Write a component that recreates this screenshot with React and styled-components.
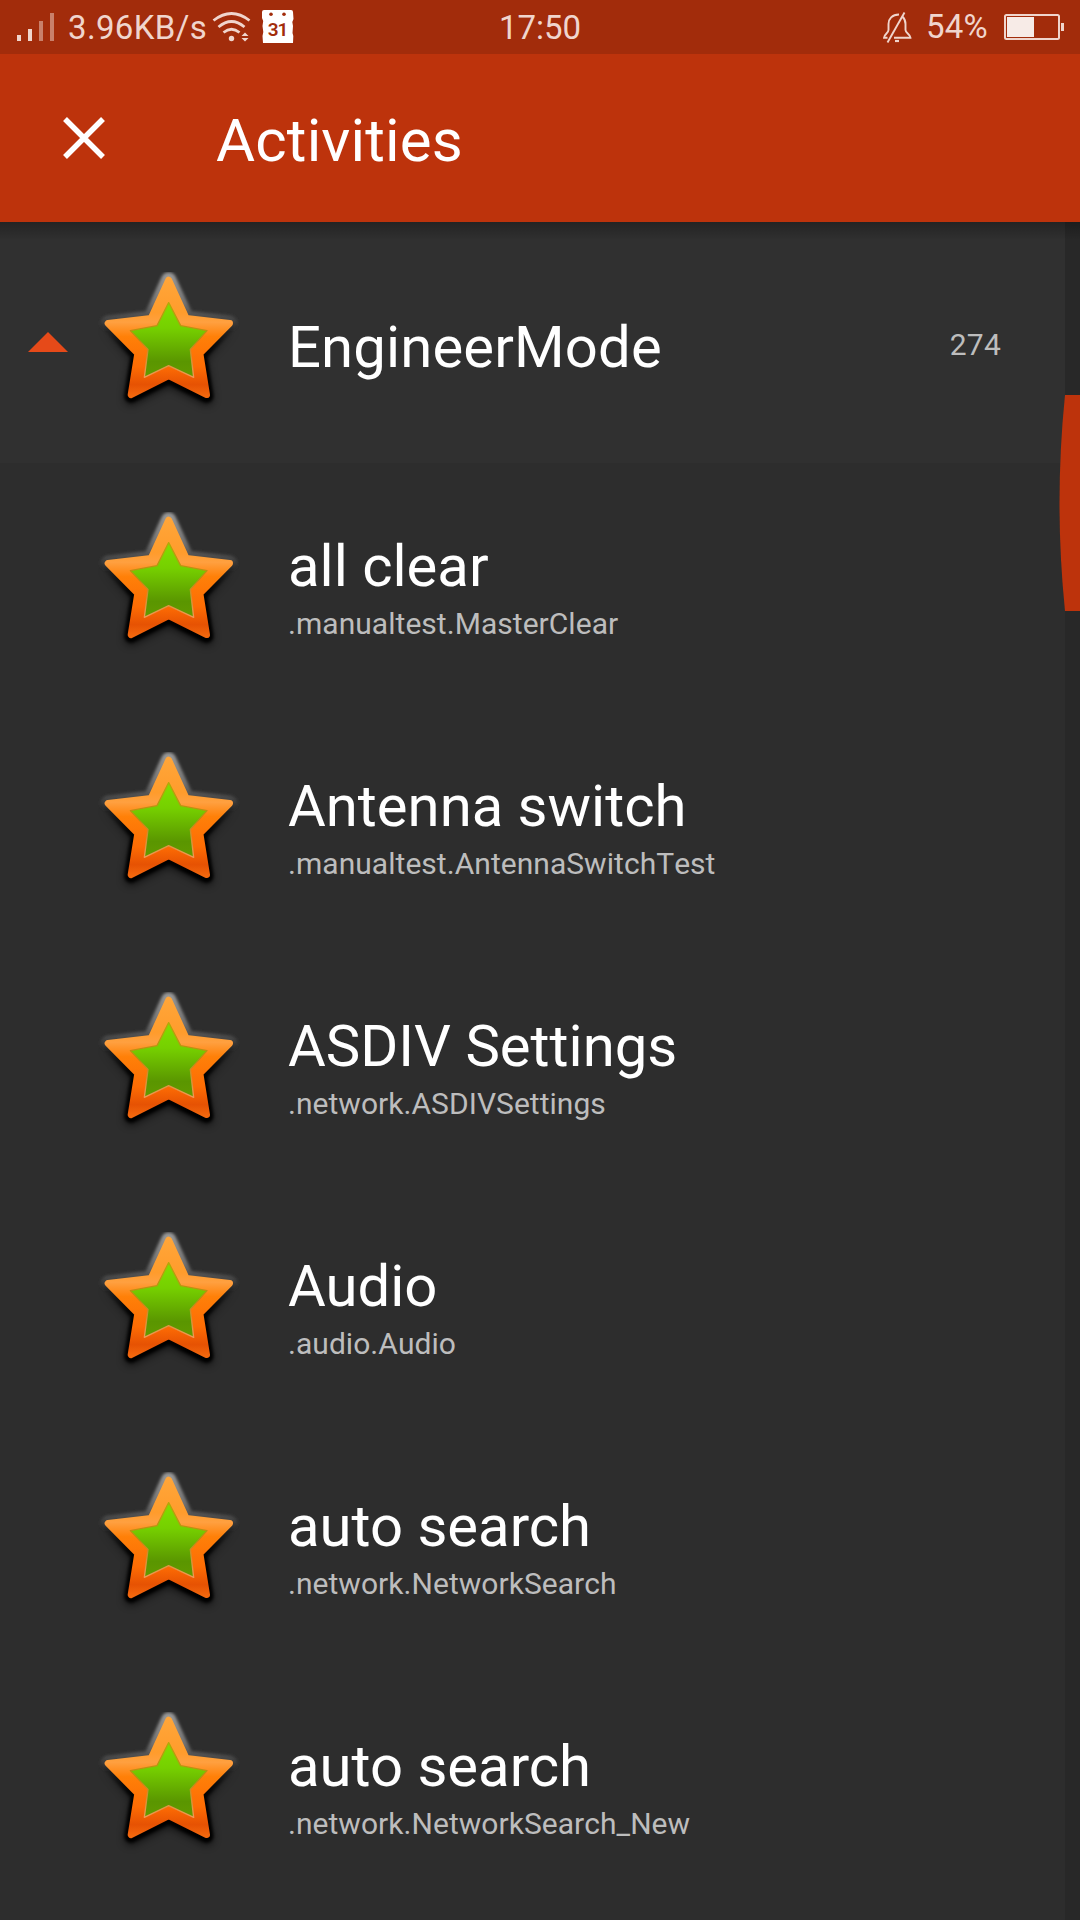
import styled, { createGlobalStyle } from 'styled-components'

const activities = [
    { title: 'all clear', path: '.manualtest.MasterClear' },
    { title: 'Antenna switch', path: '.manualtest.AntennaSwitchTest' },
    { title: 'ASDIV Settings', path: '.network.ASDIVSettings' },
    { title: 'Audio', path: '.audio.Audio' },
    { title: 'auto search', path: '.network.NetworkSearch' },
    { title: 'auto search', path: '.network.NetworkSearch_New' },
]

const OUTER =
    'M236 60 L289 175 L419 190 L330 280 L350 404 L236 347 L123 404 L143 280 L54 190 L183 175 Z'
const INNER =
    'M236 128 L272 197 L351 212 L301 268 L311 352 L236 317 L163 352 L174 268 L121 212 L201 197 Z'

const StarDefs = () => (
    <HiddenSvg width="0" height="0">
        <defs>
            <linearGradient id="orange" gradientUnits="userSpaceOnUse" x1="0" y1="50" x2="0" y2="410">
                <stop offset="0" stopColor="#ffa63a" />
                <stop offset="0.3" stopColor="#ff9c2c" />
                <stop offset="0.38" stopColor="#ffa040" />
                <stop offset="0.5" stopColor="#ff8008" />
                <stop offset="0.75" stopColor="#fd6c04" />
                <stop offset="0.9" stopColor="#e65203" />
                <stop offset="1" stopColor="#f4690e" />
            </linearGradient>
            <linearGradient id="green" gradientUnits="userSpaceOnUse" x1="0" y1="125" x2="0" y2="350">
                <stop offset="0" stopColor="#7fe000" />
                <stop offset="0.35" stopColor="#76d000" />
                <stop offset="0.8" stopColor="#5a9600" />
                <stop offset="1" stopColor="#629a00" />
            </linearGradient>
            <linearGradient id="rim" gradientUnits="userSpaceOnUse" x1="0" y1="125" x2="0" y2="355">
                <stop offset="0" stopColor="#b4a808" />
                <stop offset="0.5" stopColor="#b98a14" />
                <stop offset="1" stopColor="#f09a58" />
            </linearGradient>
            <linearGradient id="halo" gradientUnits="userSpaceOnUse" x1="0" y1="40" x2="0" y2="215">
                <stop offset="0" stopColor="#9a9a9a" />
                <stop offset="0.5" stopColor="#747474" />
                <stop offset="0.75" stopColor="#4c4c4c" />
                <stop offset="1" stopColor="#303030" stopOpacity="0" />
            </linearGradient>
            <linearGradient id="shade" gradientUnits="userSpaceOnUse" x1="0" y1="190" x2="0" y2="290">
                <stop offset="0" stopColor="#000" stopOpacity="0" />
                <stop offset="1" stopColor="#000" />
            </linearGradient>
            <filter id="soft" x="-20%" y="-20%" width="140%" height="140%">
                <feGaussianBlur stdDeviation="4" />
            </filter>
            <filter id="softer" x="-20%" y="-20%" width="140%" height="140%">
                <feGaussianBlur stdDeviation="12" />
            </filter>
            <clipPath id="iconBox">
                <rect x="0" y="36" width="480" height="444" />
            </clipPath>
        </defs>
    </HiddenSvg>
)

const Star = () => (
    <StarSvg viewBox="0 9 480 480">
        <g clipPath="url(#iconBox)" strokeLinejoin="round">
            <path d={OUTER} transform="translate(0 12)" fill="url(#shade)" stroke="url(#shade)" strokeWidth="38" opacity="0.65" filter="url(#softer)" />
            <path d={OUTER} fill="url(#halo)" stroke="url(#halo)" strokeWidth="46" filter="url(#soft)" />
            <path d={OUTER} transform="translate(0 4)" fill="url(#shade)" stroke="url(#shade)" strokeWidth="40" filter="url(#soft)" />
            <path d={OUTER} fill="url(#orange)" stroke="url(#orange)" strokeWidth="20" />
            <path d={INNER} fill="url(#green)" stroke="url(#rim)" strokeWidth="4" />
        </g>
    </StarSvg>
)

const StatusBar = () => (
    <Status>
        <StatusSide>
            <svg width="68" height="54" fill="#f0d5cd">
                <rect x="17" y="35" width="4" height="6" />
                <rect x="28" y="29" width="4" height="12" />
                <rect x="39" y="21" width="4" height="20" fill="#c9806b" />
                <rect x="50" y="13" width="4" height="28" fill="#c9806b" />
            </svg>
            <StatusText $drop={1} $width={142} $spacing={0.35}>3.96KB/s</StatusText>
            <svg width="50" height="54" viewBox="210 0 50 54" fill="none" stroke="#f0d5cd" strokeWidth="2.8">
                <path d="M213.500 20.500 Q231.500 6.500 249.500 20.500" />
                <path d="M218.500 27 Q231.500 16 244.500 27" />
                <path d="M223.500 32.500 Q231.500 26 239.500 32.500" />
                <circle cx="231.500" cy="38.500" r="2.700" fill="#f0d5cd" stroke="none" />
                <path d="M241.500 36 L245 32.500 L248.500 36 Z M241.500 38 L245 41.500 L248.500 38 Z" fill="#f0d5cd" stroke="none" />
            </svg>
            <Calendar>
                <svg width="33" height="54" viewBox="261 0 33 54">
                    <path
                        d="M264 10 H291 Q293 10 293 12 L293.500 19 L292.300 22 L293 26 L292.500 33 L293.300 36 L293 43 H263 L262.500 36 L263.300 32 L262.500 26 L263.200 21 L262 18 L262 12 Q262 10 264 10 Z"
                        fill="#fff"
                    />
                    <circle cx="271" cy="14.200" r="1.800" fill="#a22c0b" />
                    <circle cx="284" cy="14.200" r="1.800" fill="#a22c0b" />
                </svg>
                <Day>31</Day>
            </Calendar>
        </StatusSide>
        <StatusText $drop={1}>17:50</StatusText>
        <StatusSide $end>
            <svg width="46" height="54" viewBox="880 0 46 54" fill="none" stroke="#f0d5cd" strokeWidth="1.900">
                <path d="M899 14.500 C892 14.500 888.500 19 888.500 24 V30 C888.500 33 884 34.500 884 37.700 H887.500 M894 37.700 H910.500 C910.500 34.500 905.500 33 905.500 30 V24 C905.500 20.500 904.500 18.500 902.500 16.700" />
                <path d="M904.500 12.500 L887.500 42.500" />
                <path d="M895 41 H899" strokeWidth="2.200" />
            </svg>
            <StatusText $drop={0} $width={78} $spacing={0.2}>54%</StatusText>
            <svg width="76" height="54" viewBox="1004 0 76 54">
                <rect x="1005" y="15" width="54" height="24" rx="1.500" fill="none" stroke="#f0d5cd" strokeWidth="2" />
                <rect x="1007" y="17" width="27" height="20" fill="#f7ebe7" />
                <rect x="1061" y="23" width="3" height="8" fill="#f0d5cd" />
            </svg>
        </StatusSide>
    </Status>
)

const App = () => (
    <Screen>
        <GlobalStyle />
        <StarDefs />
        <StatusBar />
        <AppBar>
            <CloseIcon viewBox="0 0 42 42">
                <path d="M2 2 L40 40 M40 2 L2 40" stroke="#fff" strokeWidth="5.500" />
            </CloseIcon>
            <Heading>Activities</Heading>
        </AppBar>
        <List>
            <GroupRow>
                <Arrow viewBox="0 0 40 20">
                    <path d="M0 20 L20 0 L40 20 Z" fill="#e64a19" />
                </Arrow>
                <Star />
                <GroupName>EngineerMode</GroupName>
                <Count>274</Count>
            </GroupRow>
            {activities.map(({ title, path }) => (
                <Row key={path}>
                    <Star />
                    <Info>
                        <Title>{title}</Title>
                        <Path>{path}</Path>
                    </Info>
                </Row>
            ))}
            <Track />
            <Thumb viewBox="0 0 21 216">
                <path d="M21 0 H6 Q-5 108 6 216 H21 Z" fill="#bd330c" />
            </Thumb>
        </List>
    </Screen>
)

export default App

const GlobalStyle = createGlobalStyle`
    body {
        margin: 0;
        background-color: #2d2d2d;
    }
`

const Screen = styled.div`
    display: flex;
    flex-direction: column;
    width: 1080px;
    height: 1920px;
    overflow: hidden;
    background-color: #2d2d2d;
    color: white;
    font-family: Roboto, sans-serif;
    white-space: nowrap;

    svg {
        display: block;
        flex-shrink: 0;
    }
`

const HiddenSvg = styled.svg`
    position: absolute;
`

const Status = styled.div`
    display: grid;
    grid-template-columns: 1fr auto 1fr;
    height: 54px;
    flex-shrink: 0;
    background-color: #a22c0b;
`

const StatusSide = styled.div`
    display: flex;
    justify-content: ${({ $end }) => ($end ? 'flex-end' : 'flex-start')};
`

const StatusText = styled.div`
    box-sizing: border-box;
    width: ${({ $width }) => ($width ? `${$width}px` : 'auto')};
    padding-top: ${({ $drop }) => $drop}px;
    font-size: 33px;
    line-height: 54px;
    letter-spacing: ${({ $spacing = 0 }) => $spacing}px;
    color: #f0d5cd;
`

const Calendar = styled.div`
    display: grid;
    margin-left: 1px;

    > * {
        grid-area: 1 / 1;
    }
`

const Day = styled.div`
    padding-top: 5px;
    text-align: center;
    font-size: 19px;
    font-weight: 600;
    line-height: 50px;
    letter-spacing: -1px;
    color: #a22c0b;
`

const AppBar = styled.div`
    display: flex;
    align-items: center;
    height: 168px;
    flex-shrink: 0;
    padding-left: 63px;
    background-color: #bd330c;
`

const CloseIcon = styled.svg`
    width: 42px;
    height: 42px;
`

const Heading = styled.div`
    margin-left: 111px;
    padding-top: 5px;
    font-size: 60px;
    line-height: 70px;
    letter-spacing: 0.15px;
`

const List = styled.div`
    position: relative;
    flex: 1;
    background-color: #2d2d2d;

    &::before {
        content: '';
        position: absolute;
        z-index: 1;
        top: 0;
        left: 0;
        right: 0;
        height: 18px;
        background: linear-gradient(rgba(0, 0, 0, 0.27), rgba(0, 0, 0, 0));
    }
`

const Row = styled.div`
    display: flex;
    align-items: center;
    height: 240px;
    padding-left: 90px;
`

const GroupRow = styled(Row)`
    padding-top: 1px;
    padding-left: 28px;
    background-color: #303030;
`

const Arrow = styled.svg`
    width: 40px;
    height: 20px;
    margin-right: 22px;
    margin-bottom: 2px;
`

const StarSvg = styled.svg`
    width: 160px;
    height: 160px;
`

const Info = styled.div`
    margin-left: 38px;
    padding-top: 8px;
`

const Title = styled.div`
    font-size: 58px;
    line-height: 68px;
`

const GroupName = styled(Title)`
    flex: 1;
    margin-left: 38px;
    padding-top: 8px;
    letter-spacing: 0.15px;
`

const Path = styled.div`
    margin-top: 6px;
    font-size: 30px;
    line-height: 36px;
    letter-spacing: 0.04px;
    font-kerning: none;
    color: #bdbdbd;
`

const Count = styled.div`
    margin-right: 79px;
    padding-top: 3px;
    font-size: 30px;
    line-height: 36px;
    letter-spacing: 0.2px;
    color: #bdbdbd;
`

const Track = styled.div`
    position: absolute;
    top: 0;
    right: 0;
    bottom: 0;
    width: 15px;
    background-color: #282828;
`

const Thumb = styled.svg`
    position: absolute;
    top: 173px;
    right: 0;
    width: 21px;
    height: 216px;
`
